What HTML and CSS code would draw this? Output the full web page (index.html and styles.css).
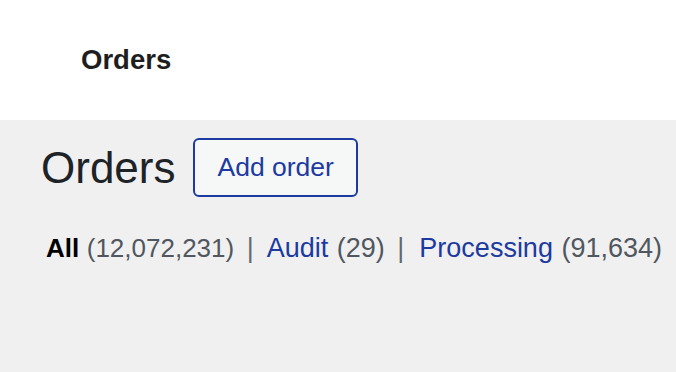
FILE: index.html
```html
<!DOCTYPE html>
<html lang="en">
<head>
  <meta charset="UTF-8" />
  <meta name="viewport" content="width=device-width, initial-scale=1.0"/>
  <title>Orders</title>
  <link rel="stylesheet" href="styles.css">
</head>
<body>

  <div class="topbar">
    <span class="topbar-title">Orders</span>
  </div>

  <div class="wrap">
    <div class="page-head">
      <h1>Orders</h1>
      <a href="#" class="add-btn">Add order</a>
    </div>

    <ul class="subsubsub">
      <li><a href="#" class="current">All</a> <span class="count first">(12,072,231)</span> <span class="sep">|</span></li>
      <li><a href="#">Audit</a> <span class="count">(29)</span> <span class="sep">|</span></li>
      <li><a href="#">Processing</a> <span class="count">(91,634)</span></li>
    </ul>
  </div>

</body>
</html>
```

FILE: styles.css
```css
body {
  font-family: 'Liberation Sans', Arial, sans-serif;
  background-color: #f0f0f1;
  margin: 0;
  color: #1d2327;
}
.topbar {
  background-color: #fff;
  height: 120px;
  display: flex;
  align-items: center;
  padding-left: 81px;
}
.topbar-title {
  font-size: 27.5px;
  font-weight: bold;
  color: #1e1e1e;
}
.wrap {
  padding: 18px 0 0 41px;
}
.page-head {
  display: flex;
  align-items: center;
  gap: 18px;
}
.page-head h1 {
  font-size: 44px;
  font-weight: normal;
  margin: 0;
  color: #1d2327;
}
.add-btn {
  display: inline-block;
  box-sizing: border-box;
  height: 59px;
  line-height: 55px;
  padding: 0 22px;
  border: 2px solid #1c3aa0;
  border-radius: 6px;
  background-color: #f6f7f7;
  color: #1c3aa0;
  font-size: 26.5px;
  text-decoration: none;
}
.subsubsub {
  list-style: none;
  margin: 36px 0 0 5px;
  padding: 0;
  display: flex;
  font-size: 27px;
  color: #50575e;
  white-space: pre;
}
.subsubsub li {
  margin-right: 10px;
}
.subsubsub li:first-child {
  margin-right: 8px;
}
.subsubsub a {
  color: #1c3aa0;
  text-decoration: none;
}
.subsubsub a.current {
  color: #000;
  font-weight: bold;
  font-size: 26px;
}
.subsubsub .count {
  margin-left: 1px;
}
.subsubsub .count.first {
  font-size: 26px;
  margin-left: 0;
}
.subsubsub .sep {
  color: #646970;
  padding: 0 5px;
}
```
